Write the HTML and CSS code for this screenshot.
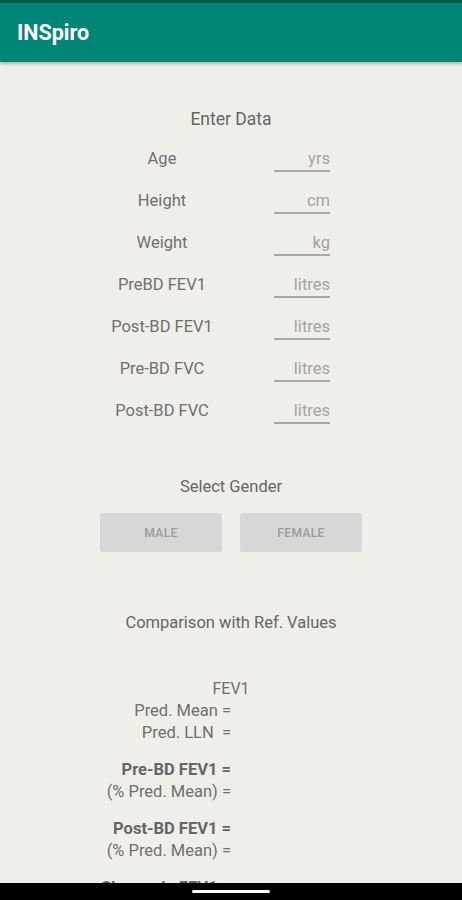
FILE: index.html
```html
<!DOCTYPE html>
<html>
<head>
<meta charset="utf-8">
<link rel="stylesheet" href="styles.css">
</head>
<body>
<div class="status"></div>
<header class="appbar"><span class="title">INSpiro</span></header>
<main class="content">
  <h2 class="heading first">Enter Data</h2>
  <div class="form">
    <div class="row"><span class="label">Age</span><span class="input">yrs</span></div>
    <div class="row"><span class="label">Height</span><span class="input">cm</span></div>
    <div class="row"><span class="label">Weight</span><span class="input">kg</span></div>
    <div class="row"><span class="label">PreBD FEV1</span><span class="input">litres</span></div>
    <div class="row"><span class="label">Post-BD FEV1</span><span class="input">litres</span></div>
    <div class="row"><span class="label">Pre-BD FVC</span><span class="input">litres</span></div>
    <div class="row"><span class="label">Post-BD FVC</span><span class="input">litres</span></div>
  </div>
  <h2 class="heading gender">Select Gender</h2>
  <div class="buttons">
    <button class="btn">MALE</button>
    <button class="btn">FEMALE</button>
  </div>
  <h2 class="heading compare">Comparison with Ref. Values</h2>
  <div class="results">
    <div class="res-title">FEV1</div>
    <div class="group">
      <div class="line">Pred. Mean =</div>
      <div class="line">Pred. LLN&nbsp;&nbsp;=</div>
    </div>
    <div class="group">
      <div class="line bold">Pre-BD FEV1 =</div>
      <div class="line">(% Pred. Mean) =</div>
    </div>
    <div class="group">
      <div class="line bold">Post-BD FEV1 =</div>
      <div class="line">(% Pred. Mean) =</div>
    </div>
    <div class="group">
      <div class="line bold">Change in FEV1 =</div>
      <div class="line">(% change) =</div>
    </div>
  </div>
</main>
<div class="navbar"><span class="handle"></span></div>
</body>
</html>
```
FILE: styles.css
```css
* { box-sizing: border-box; }
html, body { margin: 0; padding: 0; }
body {
  background: #efeee9;
  font-family: Roboto, "Liberation Sans", sans-serif;
  color: #6f6f6f;
  width: 462px;
}
.status { height: 3px; background: #00574b; }
.appbar {
  height: 59px;
  background: #008577;
  display: flex;
  align-items: center;
  padding-left: 17px;
  box-shadow: 0 2px 3px rgba(0,0,0,0.25);
  position: relative;
}
.title {
  color: #ffffff;
  font-size: 21.5px;
  font-weight: 700;
}
.content { padding-top: 46px; }
.heading {
  margin: 0;
  font-size: 16.5px;
  font-weight: 400;
  line-height: 20px;
  text-align: center;
  color: #666666;
}
.heading.first { font-size: 17.5px; margin-top: 1px; }
.form { padding-top: 20px; padding-left: 100px; }
.row {
  display: flex;
  align-items: flex-start;
  gap: 50px;
  height: 42px;
}
.label {
  width: 124px;
  text-align: center;
  font-size: 16.5px;
  line-height: 20px;
  color: #707070;
}
.input {
  width: 56px;
  text-align: right;
  font-size: 16.5px;
  line-height: 20px;
  color: #a3a3a3;
  padding-bottom: 1px;
  border-bottom: 2px solid #a9a9a9;
}
.heading.gender { margin-top: 34px; }
.buttons {
  display: flex;
  justify-content: center;
  gap: 18px;
  margin-top: 16px;
}
.btn {
  width: 122px;
  height: 39px;
  border: none;
  border-radius: 2px;
  background: #d6d7d7;
  color: #9c9c9c;
  font-family: Roboto, "Liberation Sans", sans-serif;
  font-size: 12px;
  font-weight: 500;
  letter-spacing: 0.4px;
  padding: 0;
}
.heading.compare { margin-top: 61px; }
.results {
  margin-top: 45px;
  display: flex;
  flex-direction: column;
}
.res-title {
  text-align: center;
  font-size: 16px;
  line-height: 22px;
  color: #6f6f6f;
}
.group { width: 231px; text-align: right; }
.group + .group { margin-top: 15px; }
.line {
  font-size: 16.5px;
  line-height: 22px;
  white-space: pre;
  color: #707070;
}
.line.bold { font-weight: 700; color: #666666; }
.navbar {
  position: fixed;
  left: 0;
  right: 0;
  bottom: 0;
  height: 17px;
  background: #000000;
  display: flex;
  justify-content: center;
  align-items: center;
}
.handle {
  width: 78px;
  height: 3px;
  border-radius: 2px;
  background: #ffffff;
}
```
